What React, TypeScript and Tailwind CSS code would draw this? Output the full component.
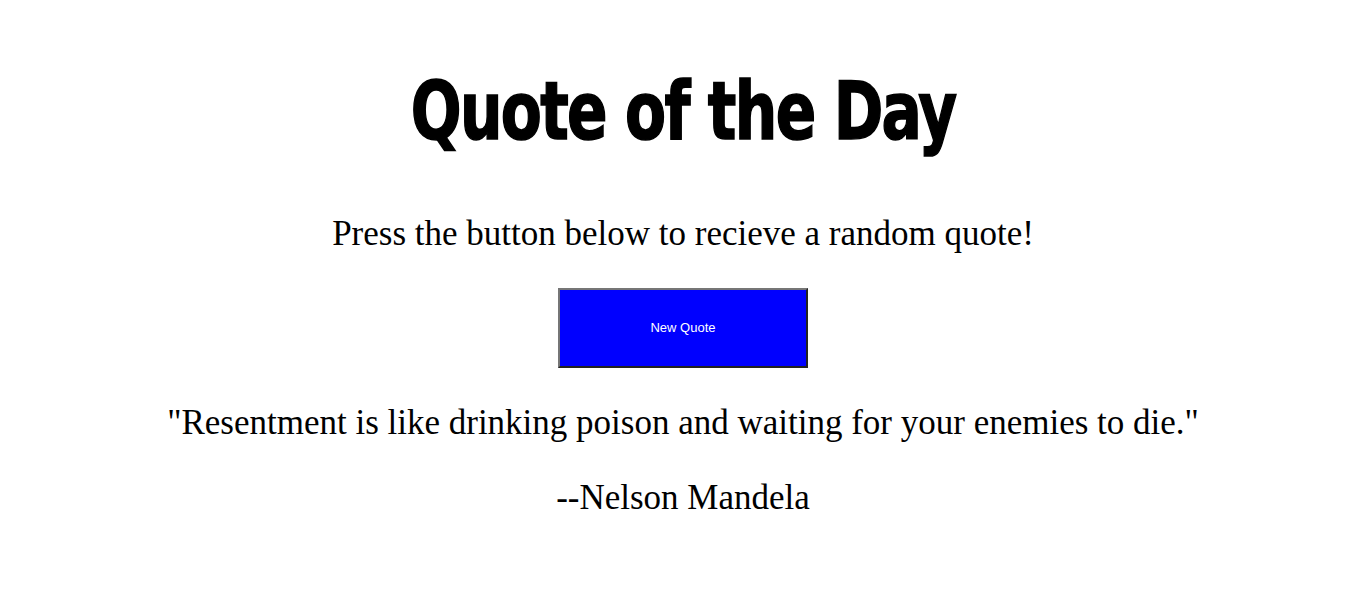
export default function App() {
  return (
    <div className="flex min-h-[600px] flex-col items-center bg-white text-black">
      <h1
        className="mt-[62px] inline-block scale-x-[0.83] text-[80px] leading-[100px] font-bold tracking-[-2px] [-webkit-text-stroke:1.5px_black]"
        style={{ fontFamily: 'Impact, "DejaVu Sans Condensed", "DejaVu Sans", sans-serif', fontStretch: 'condensed' }}
      >
        Quote of the Day
      </h1>
      <p className="mt-[52px] font-['Liberation_Serif',serif] text-[35px] leading-[40px]">
        Press the button below to recieve a random quote!
      </p>
      <button className="mt-[34px] h-[80px] w-[250px] border-2 border-t-[#767676] border-l-[#767676] border-r-[#222] border-b-[#222] bg-[#0000ff] font-['Liberation_Sans',sans-serif] text-[13px] text-white">
        New Quote
      </button>
      <p className="mt-[35px] font-['Liberation_Serif',serif] text-[35px] leading-[40px]">
        "Resentment is like drinking poison and waiting for your enemies to die."
      </p>
      <p className="mt-[35px] font-['Liberation_Serif',serif] text-[35px] leading-[40px]">
        --Nelson Mandela
      </p>
    </div>
  );
}
